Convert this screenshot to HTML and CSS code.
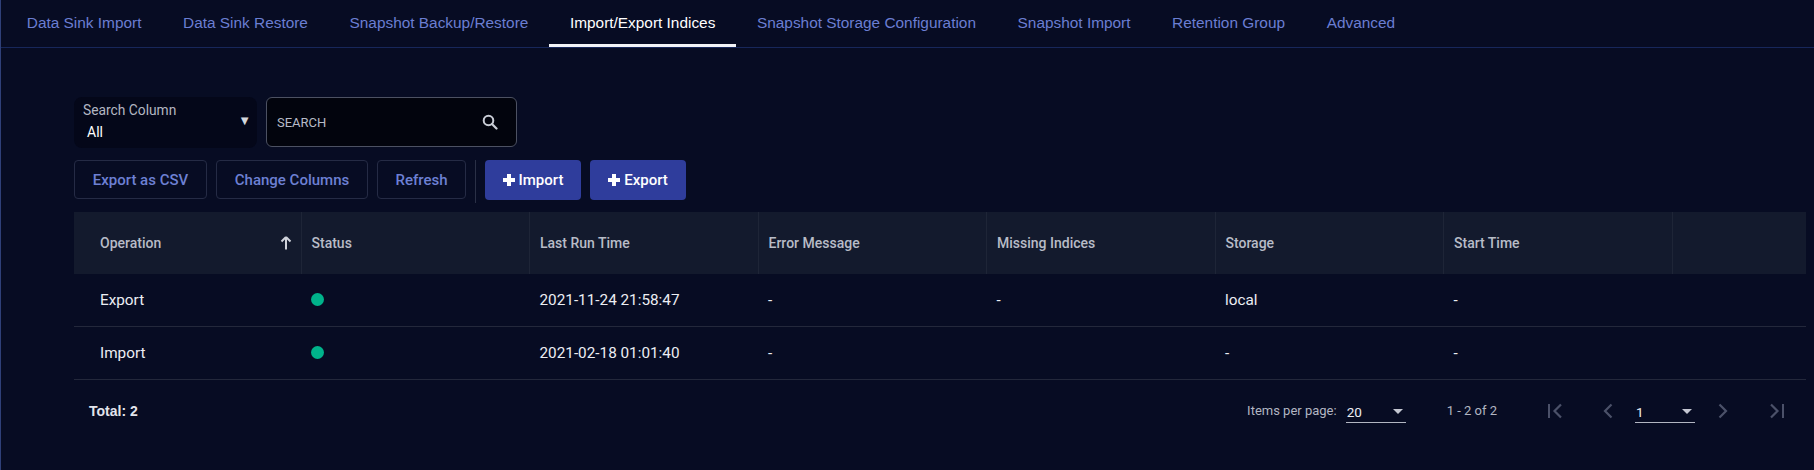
FILE: index.html
```html
<!DOCTYPE html>
<html>
<head>
<meta charset="utf-8">
<link rel="stylesheet" href="styles.css">
</head>
<body>
<div class="page">
  <nav class="tabs">
    <a class="tab">Data Sink Import</a>
    <a class="tab">Data Sink Restore</a>
    <a class="tab">Snapshot Backup/Restore</a>
    <a class="tab active">Import/Export Indices</a>
    <a class="tab">Snapshot Storage Configuration</a>
    <a class="tab">Snapshot Import</a>
    <a class="tab">Retention Group</a>
    <a class="tab">Advanced</a>
  </nav>
  <main class="content">
    <div class="search-row">
      <div class="select-col">
        <div class="select-label">Search Column</div>
        <div class="select-value">All</div>
        <span class="select-arrow">&#9660;</span>
      </div>
      <div class="search-box">
        <span class="search-placeholder">SEARCH</span>
        <svg class="search-icon" width="16" height="16" viewBox="0 0 16 16"><circle cx="6.5" cy="6.5" r="4.8" fill="none" stroke="#c9cdd6" stroke-width="2"/><line x1="10" y1="10" x2="14.5" y2="14.5" stroke="#c9cdd6" stroke-width="2.2" stroke-linecap="round"/></svg>
      </div>
    </div>
    <div class="actions">
      <button class="btn outline w-csv">Export as CSV</button>
      <button class="btn outline w-cols">Change Columns</button>
      <button class="btn outline w-ref">Refresh</button>
      <span class="divider"></span>
      <button class="btn primary"><svg class="plus" width="12" height="12" viewBox="0 0 12 12"><rect x="4" y="0" width="4" height="12" fill="#fff"/><rect x="0" y="4" width="12" height="4" fill="#fff"/></svg>Import</button>
      <button class="btn primary"><svg class="plus" width="12" height="12" viewBox="0 0 12 12"><rect x="4" y="0" width="4" height="12" fill="#fff"/><rect x="0" y="4" width="12" height="4" fill="#fff"/></svg>Export</button>
    </div>
    <table class="grid">
      <colgroup>
        <col class="c-first"><col class="c"><col class="c"><col class="c"><col class="c"><col class="c"><col class="c"><col>
      </colgroup>
      <thead>
        <tr>
          <th class="first"><div class="th-op"><span>Operation</span><svg width="12" height="14" viewBox="0 0 12 14"><path d="M6 1 L1.5 5.5 M6 1 L10.5 5.5 M6 1 V13.5" stroke="#d0d3db" stroke-width="2" fill="none"/></svg></div></th>
          <th>Status</th>
          <th>Last Run Time</th>
          <th>Error Message</th>
          <th>Missing Indices</th>
          <th>Storage</th>
          <th>Start Time</th>
          <th></th>
        </tr>
      </thead>
      <tbody>
        <tr>
          <td class="first">Export</td>
          <td><span class="dot"></span></td>
          <td>2021-11-24 21:58:47</td>
          <td>-</td>
          <td>-</td>
          <td>local</td>
          <td>-</td>
          <td></td>
        </tr>
        <tr>
          <td class="first">Import</td>
          <td><span class="dot"></span></td>
          <td>2021-02-18 01:01:40</td>
          <td>-</td>
          <td></td>
          <td>-</td>
          <td>-</td>
          <td></td>
        </tr>
      </tbody>
    </table>
    <div class="footer">
      <div class="total">Total: 2</div>
      <div class="pager">
        <span class="ipp">Items per page:</span>
        <div class="pselect w-ipp"><span>20</span><span class="tri"></span></div>
        <span class="range">1 - 2 of 2</span>
        <span class="ibtn first-btn"><svg width="18" height="16" viewBox="0 0 18 16"><rect x="1" y="1" width="2" height="14" fill="#4b5169"/><path d="M14 1.5 L7.5 8 L14 14.5" stroke="#4b5169" stroke-width="2.2" fill="none"/></svg></span>
        <span class="ibtn prev-btn"><svg width="10" height="16" viewBox="0 0 10 16"><path d="M8.5 1.5 L2 8 L8.5 14.5" stroke="#4b5169" stroke-width="2.2" fill="none"/></svg></span>
        <div class="pselect w-page"><span>1</span><span class="tri"></span></div>
        <span class="ibtn next-btn"><svg width="10" height="16" viewBox="0 0 10 16"><path d="M1.5 1.5 L8 8 L1.5 14.5" stroke="#4b5169" stroke-width="2.2" fill="none"/></svg></span>
        <span class="ibtn last-btn"><svg width="18" height="16" viewBox="0 0 18 16"><path d="M4 1.5 L10.5 8 L4 14.5" stroke="#4b5169" stroke-width="2.2" fill="none"/><rect x="15" y="1" width="2" height="14" fill="#4b5169"/></svg></span>
      </div>
    </div>
  </main>
</div>
</body>
</html>
```
FILE: styles.css
```css
* { box-sizing: border-box; }
html, body { margin: 0; padding: 0; }
body {
  background: #070c23;
  font-family: Roboto, "Liberation Sans", sans-serif;
  color: #e9eaf0;
  width: 1814px;
  height: 470px;
  overflow: hidden;
}
.page {
  border-left: 1px solid #2f4078;
  height: 470px;
}
.tabs {
  display: flex;
  height: 48px;
  border-bottom: 1px solid #17275a;
  padding-left: 5px;
  font-family: "Liberation Sans", Arial, sans-serif;
  font-size: 15.4px;
}
.tab {
  position: relative;
  display: flex;
  align-items: center;
  padding: 0 20.8px 1px;
  color: #6b7ed2;
  white-space: nowrap;
}
.tab.active { color: #ffffff; }
.tab.active::after {
  content: "";
  position: absolute;
  left: 0;
  right: 0;
  bottom: 0;
  height: 3px;
  background: #f2f3f7;
}
.content {
  padding: 49px 8px 0 73px;
}
.search-row {
  display: flex;
  gap: 9px;
  height: 50px;
}
.select-col {
  position: relative;
  width: 183px;
  height: 51px;
  background: #040719;
  border-radius: 8px;
  padding: 5px 0 0 9px;
}
.select-label {
  font-size: 13.8px;
  color: #b3b6c2;
  line-height: 16px;
}
.select-value {
  font-size: 14px;
  color: #ffffff;
  margin: 6px 0 0 4px;
  line-height: 17px;
}
.select-arrow {
  position: absolute;
  right: 6px;
  top: 16px;
  font-size: 13px;
  color: #d4d6dc;
}
.search-box {
  width: 251px;
  height: 50px;
  border: 1px solid #4c5162;
  border-radius: 6px;
  background: #02040d;
  display: flex;
  align-items: center;
  justify-content: space-between;
  padding: 0 18px 0 10px;
}
.search-placeholder {
  font-size: 13px;
  color: #b7bbc7;
}
.actions {
  display: flex;
  gap: 9px;
  margin-top: 13px;
  height: 43px;
}
.btn {
  height: 39px;
  border-radius: 4px;
  font-family: Roboto, sans-serif;
  font-size: 15px;
  font-weight: 500;
  display: flex;
  align-items: center;
  justify-content: center;
  cursor: pointer;
}
.btn.outline {
  background: transparent;
  border: 1px solid #252b45;
  color: #6d80d4;
}
.w-csv { width: 133px; }
.w-cols { width: 152px; }
.w-ref { width: 89px; }
.divider {
  width: 1px;
  height: 43px;
  background: #2a3046;
}
.btn.primary {
  width: 96px;
  height: 40px;
  background: #2f3d9c;
  border: none;
  color: #ffffff;
  gap: 4px;
}
.plus { display: block; }
.grid {
  margin-top: 9px;
  width: 1732px;
  border-collapse: collapse;
  table-layout: fixed;
}
.c-first { width: 227px; }
.c { width: 228.5px; }
thead tr {
  background: #131a2d;
  height: 62px;
}
th {
  text-align: left;
  font-size: 14px;
  font-weight: 500;
  color: #b8bcc7;
  padding: 0 10px;
  border-left: 1px solid #1e2537;
}
th.first { border-left: none; padding: 0 9px 0 26px; }
.th-op {
  display: flex;
  align-items: center;
  justify-content: space-between;
}
.th-op svg { display: block; }
tbody tr {
  height: 53px;
  border-bottom: 1px solid #23283b;
}
tbody tr:first-child { height: 52px; }
td {
  font-size: 15.3px;
  color: #eceef3;
  padding: 0 10px;
}
td.first { padding-left: 26px; }
.dot {
  display: block;
  width: 13px;
  height: 13px;
  border-radius: 50%;
  background: #00b38b;
}
.footer {
  display: flex;
  align-items: center;
  justify-content: space-between;
  height: 62px;
  padding: 0 10px 0 15px;
}
.total {
  font-family: "Liberation Sans", Arial, sans-serif;
  font-weight: bold;
  font-size: 14px;
  color: #e2e4ec;
}
.pager {
  display: flex;
  align-items: center;
  font-size: 13px;
  color: #b2b6c2;
}
.ipp { margin-right: 9px; }
.pselect {
  display: flex;
  align-items: center;
  justify-content: space-between;
  height: 24px;
  border-bottom: 1px solid #b2b6c2;
  color: #eceef3;
  font-size: 13.5px;
  padding: 2px 3px 0 1px;
  margin-top: 1px;
}
.w-ipp { width: 60px; }
.w-page { width: 60px; }
.tri {
  width: 0;
  height: 0;
  border-left: 5px solid transparent;
  border-right: 5px solid transparent;
  border-top: 5px solid #c4c7d2;
}
.range { margin-left: 41px; }
.ibtn {
  width: 40px;
  height: 40px;
  display: flex;
  align-items: center;
  justify-content: center;
}
.first-btn { margin-left: 39px; }
.prev-btn { margin-left: 12px; }
.w-page { margin-left: 7px; }
.next-btn { margin-left: 8px; }
.last-btn { margin-left: 13px; }
```
